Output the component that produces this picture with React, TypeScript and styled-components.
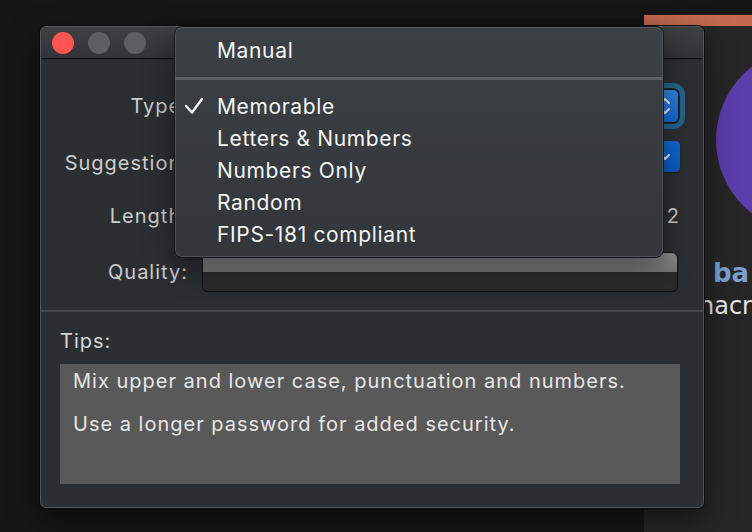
import React from "react";
import styled, { createGlobalStyle } from "styled-components";

const Global = createGlobalStyle`
  html, body { margin: 0; padding: 0; background: #161616; }
  body {
    width: 752px; height: 532px; overflow: hidden;
    font-family: Inter, "Noto Sans", sans-serif;
    -webkit-font-smoothing: antialiased;
  }
`;

const Desktop = styled.div`
  position: relative;
  width: 752px;
  height: 532px;
  background: #161616;
  overflow: hidden;
`;

/* ---------- background app on the right ---------- */
const BackApp = styled.div`
  position: absolute;
  left: 644px;
  top: 15px;
  width: 108px;
  bottom: 0;
  background: #262626;
  display: flex;
  flex-direction: column;
  overflow: hidden;
`;
const BackStrip = styled.div`
  height: 11px;
  flex: none;
  background: #c36b51;
`;
const Avatar = styled.div`
  position: absolute;
  left: 72px;
  top: 32px;
  width: 186px;
  height: 186px;
  border-radius: 50%;
  background: #5b3dab;
`;
const BackContent = styled.div`
  display: flex;
  flex-direction: column;
  padding-top: 232px;
`;
const BackTitle = styled.div`
  font-family: "DejaVu Sans", sans-serif;
  font-weight: 700;
  font-size: 26px;
  line-height: 30px;
  color: #7b9fcf;
  padding-left: 69px;
  white-space: nowrap;
`;
const BackSub = styled.div`
  font-family: "DejaVu Sans", sans-serif;
  font-size: 24px;
  line-height: 36px;
  color: #e6e6e6;
  padding-left: 55px;
  white-space: nowrap;
`;

/* ---------- main window ---------- */
const Window = styled.div`
  position: absolute;
  left: 40px;
  top: 26px;
  width: 664px;
  height: 482px;
  box-sizing: border-box;
  border: 1px solid #54575a;
  border-radius: 6px;
  background: #2c2f32;
  box-shadow: 0 0 0 1px #0a0a0a, 0 12px 30px rgba(0, 0, 0, 0.5);
  display: flex;
  flex-direction: column;
  overflow: hidden;
`;
const TitleBar = styled.div`
  height: 32px;
  flex: none;
  box-sizing: border-box;
  background: linear-gradient(#3d3f41, #323437);
  border-bottom: 1px solid #0d0d0d;
  display: flex;
  align-items: center;
  gap: 14px;
  padding-left: 11px;
`;
const Light = styled.span<{ $color: string }>`
  width: 22px;
  height: 22px;
  border-radius: 50%;
  background: ${(p) => p.$color};
`;

const Form = styled.div`
  display: flex;
  flex-direction: column;
  padding-right: 23px;
`;
const Row = styled.div<{ $top: number; $h: number; $align?: string }>`
  display: grid;
  grid-template-columns: 146px 1fr;
  column-gap: 16px;
  margin-top: ${(p) => p.$top}px;
  height: ${(p) => p.$h}px;
  align-items: ${(p) => p.$align || "center"};
`;
const Label = styled.label<{ $self?: string }>`
  text-align: right;
  font-size: 20px;
  letter-spacing: 1px;
  line-height: 24px;
  color: #cdcdcd;
  white-space: nowrap;
  align-self: ${(p) => p.$self || "center"};
  margin-right: -1px;
`;

const Popup = styled.div`
  height: 34px;
  box-sizing: border-box;
  margin-right: 1px;
  border-radius: 6px;
  background: #5a5d60;
  border: 1px solid #17191b;
  display: flex;
  justify-content: flex-end;
  box-shadow: 0 0 0 1px #1d2833, 0 0 0 6px #24678f;
`;
const BlueButton = styled.div<{ $w: number }>`
  width: ${(p) => p.$w}px;
  height: 100%;
  box-sizing: border-box;
  border-radius: 0 5px 5px 0;
  background: linear-gradient(#2d84e4, #1669d2);
  display: flex;
  align-items: center;
  justify-content: center;
`;
const Combo = styled.div`
  height: 31px;
  box-sizing: border-box;
  border-radius: 5px;
  background: #4a4d50;
  display: flex;
  justify-content: flex-end;
  box-shadow: 0 1px 1px rgba(0, 0, 0, 0.4);
`;
const ComboButton = styled(BlueButton)`
  background: linear-gradient(#0f6ad2, #0a5cc3);
`;

const SliderLine = styled.div`
  display: flex;
  align-items: center;
  gap: 12px;
`;
const Track = styled.div`
  flex: 1;
  height: 4px;
  border-radius: 2px;
  background: #5a5d60;
`;
const Value = styled.span`
  font-size: 20px;
  letter-spacing: 4px;
  line-height: 24px;
  color: #cdcdcd;
  margin-right: -3px;
`;

const QualityBar = styled.div`
  height: 38px;
  margin-right: 3px;
  border-radius: 5px;
  overflow: hidden;
  display: flex;
  flex-direction: column;
  box-shadow: 0 0 0 1px #121212, 0 1px 2px rgba(0, 0, 0, 0.6);
`;
const QualityTop = styled.div`
  height: 19px;
  background: linear-gradient(#8d8d8d, #777777);
`;
const QualityBottom = styled.div`
  flex: 1;
  background: #2b2b2b;
`;

const Divider = styled.div`
  height: 2px;
  margin-top: 19px;
  background: #43474a;
  flex: none;
`;

const Tips = styled.div`
  display: flex;
  flex-direction: column;
  padding: 17px 23px 0 19px;
`;
const TipsLabel = styled.div`
  font-size: 20px;
  letter-spacing: 1px;
  line-height: 24px;
  color: #d6d6d6;
`;
const TipsBox = styled.div`
  margin-top: 11px;
  height: 120px;
  box-sizing: border-box;
  background: #595959;
  padding: 5px 13px;
  display: flex;
  flex-direction: column;
  gap: 19px;
`;
const Tip = styled.p`
  margin: 0;
  font-size: 20px;
  letter-spacing: 1px;
  line-height: 24px;
  color: #e6e6e6;
  white-space: nowrap;
`;

/* ---------- dropdown menu ---------- */
const Menu = styled.div`
  position: absolute;
  left: 174px;
  top: 26px;
  width: 490px;
  height: 232px;
  box-sizing: border-box;
  padding: 7px 0;
  border-radius: 8px;
  background: linear-gradient(#3b4044, #33373b);
  border: 1px solid #141618;
  box-shadow: inset 0 0 0 1px rgba(255, 255, 255, 0.13), 0 10px 30px rgba(0, 0, 0, 0.45);
  display: flex;
  flex-direction: column;
`;
const MenuItem = styled.div`
  height: 32px;
  display: flex;
  align-items: center;
  font-size: 21px;
  letter-spacing: 0.65px;
  color: #f4f4f4;
  white-space: nowrap;
`;
const Check = styled.span`
  width: 42px;
  flex: none;
  display: flex;
  align-items: center;
  padding-left: 9px;
  box-sizing: border-box;
`;
const MenuSep = styled.div`
  height: 24px;
  display: flex;
  align-items: center;
  &::before {
    content: "";
    flex: 1;
    height: 3px;
    background: #5c6166;
  }
`;

const Chevrons = () => (
  <svg width="14" height="22" viewBox="0 0 14 22">
    <path d="M3 8 L7 4 L11 8 M3 14 L7 18 L11 14" fill="none" stroke="#e8eef8" strokeWidth="2" strokeLinecap="round" strokeLinejoin="round" />
  </svg>
);
const ChevronDown = () => (
  <svg width="14" height="12" viewBox="0 0 14 12">
    <path d="M3 4 L7 8 L11 4" fill="none" stroke="#e8eef8" strokeWidth="2" strokeLinecap="round" strokeLinejoin="round" />
  </svg>
);
const CheckMark = () => (
  <svg width="20" height="18" viewBox="0 0 20 18">
    <path d="M2 9 L8 15.5 L18 2" fill="none" stroke="#f4f4f4" strokeWidth="2.4" strokeLinecap="round" strokeLinejoin="round" />
  </svg>
);

const options = ["Memorable", "Letters & Numbers", "Numbers Only", "Random", "FIPS-181 compliant"];

export default function App() {
  return (
    <Desktop>
      <Global />
      <BackApp>
        <BackStrip />
        <Avatar />
        <BackContent>
          <BackTitle>ba</BackTitle>
          <BackSub>nacr</BackSub>
        </BackContent>
      </BackApp>

      <Window>
        <TitleBar>
          <Light $color="#fd5652" />
          <Light $color="#5e5f60" />
          <Light $color="#5e5f60" />
        </TitleBar>
        <Form>
          <Row $top={24} $h={46}>
            <Label>Type:</Label>
            <Popup>
              <BlueButton $w={26}>
                <Chevrons />
              </BlueButton>
            </Popup>
          </Row>
          <Row $top={12} $h={34} $align="start">
            <Label $self="end">Suggestion:</Label>
            <Combo>
              <ComboButton $w={30}>
                <ChevronDown />
              </ComboButton>
            </Combo>
          </Row>
          <Row $top={25} $h={32}>
            <Label>Length:</Label>
            <SliderLine>
              <Track />
              <Value>12</Value>
            </SliderLine>
          </Row>
          <Row $top={21} $h={38}>
            <Label>Quality:</Label>
            <QualityBar>
              <QualityTop />
              <QualityBottom />
            </QualityBar>
          </Row>
        </Form>
        <Divider />
        <Tips>
          <TipsLabel>Tips:</TipsLabel>
          <TipsBox>
            <Tip>Mix upper and lower case, punctuation and numbers.</Tip>
            <Tip>Use a longer password for added security.</Tip>
          </TipsBox>
        </Tips>
      </Window>

      <Menu>
        <MenuItem>
          <Check />
          Manual
        </MenuItem>
        <MenuSep />
        {options.map((o, i) => (
          <MenuItem key={o}>
            <Check>{i === 0 && <CheckMark />}</Check>
            {o}
          </MenuItem>
        ))}
      </Menu>
    </Desktop>
  );
}
